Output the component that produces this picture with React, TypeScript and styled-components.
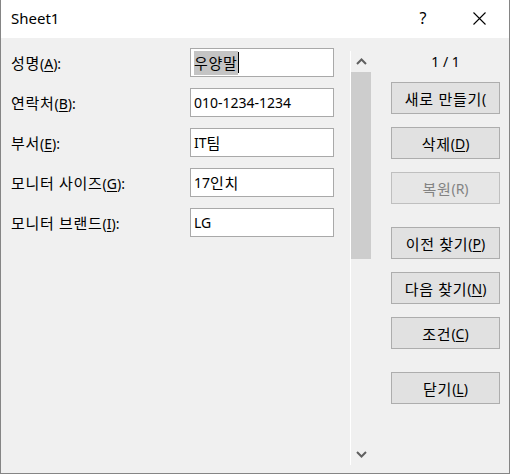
import React from "react";
import styled, { createGlobalStyle } from "styled-components";

const GlobalStyle = createGlobalStyle`
  html, body {
    margin: 0;
    padding: 0;
    background: #ffffff;
  }
  body {
    font-family: "Segoe UI", "Noto Sans", "Noto Sans CJK KR", sans-serif;
    color: #000000;
  }
`;

// Hangul runs are drawn a bit larger and looser, as the Windows dialog font does
const Ko = styled.span`
  font-size: 15px;
  letter-spacing: 0.7px;
`;

const ko = (text: string) =>
  text
    .split(/([가-힣]+(?:\s+[가-힣]+)*)/)
    .filter(Boolean)
    .map((part, i) => (/[가-힣]/.test(part) ? <Ko key={i}>{part}</Ko> : <React.Fragment key={i}>{part}</React.Fragment>));

const fields = [
  { label: "성명", key: "A", value: "우양말", selected: true },
  { label: "연락처", key: "B", value: "010-1234-1234" },
  { label: "부서", key: "E", value: "IT팀" },
  { label: "모니터 사이즈", key: "G", value: "17인치" },
  { label: "모니터 브랜드", key: "I", value: "LG" },
];

const App = () => {
  return (
    <>
      <GlobalStyle />
      <Dialog>
        <TitleBar>
          <Title>Sheet1</Title>
          <HelpButton>?</HelpButton>
          <CloseButton>
            <svg width="13" height="13" viewBox="0 0 13 13">
              <path d="M0.5 0.5 L12.5 12.5 M12.5 0.5 L0.5 12.5" stroke="#000" strokeWidth="1.1" fill="none" />
            </svg>
          </CloseButton>
        </TitleBar>
        <Body>
          <Fields>
            {fields.map((f) => (
              <FieldRow key={f.key}>
                <Label>
                  {ko(f.label)}(<u>{f.key}</u>):
                </Label>
                <Input>
                  {f.selected ? (
                    <>
                      <Selected>{ko(f.value)}</Selected>
                      <Caret />
                    </>
                  ) : (
                    ko(f.value)
                  )}
                </Input>
              </FieldRow>
            ))}
          </Fields>
          <ScrollBar>
            <ArrowBox>
              <svg width="11" height="7" viewBox="0 0 11 7">
                <polyline points="1,6 5.5,1.5 10,6" stroke="#606060" strokeWidth="2" fill="none" />
              </svg>
            </ArrowBox>
            <Track>
              <Thumb />
            </Track>
            <ArrowBox>
              <svg width="11" height="7" viewBox="0 0 11 7">
                <polyline points="1,1 5.5,5.5 10,1" stroke="#606060" strokeWidth="2" fill="none" />
              </svg>
            </ArrowBox>
          </ScrollBar>
          <Buttons>
            <Counter>1 / 1</Counter>
            <Button>{ko("새로 만들기")}(</Button>
            <Button>
              {ko("삭제")}(<u>D</u>)
            </Button>
            <Button disabled>{ko("복원")}(R)</Button>
            <Button $gapBefore>
              {ko("이전 찾기")}(<u>P</u>)
            </Button>
            <Button>
              {ko("다음 찾기")}(<u>N</u>)
            </Button>
            <Button>
              {ko("조건")}(<u>C</u>)
            </Button>
            <Button $gapBefore>
              {ko("닫기")}(<u>L</u>)
            </Button>
          </Buttons>
        </Body>
      </Dialog>
    </>
  );
};

export default App;

const Dialog = styled.div`
  width: 510px;
  height: 474px;
  box-sizing: border-box;
  border: 1px solid #858585;
  border-top: none;
  display: flex;
  flex-direction: column;
  background: #f0f0f0;
`;

const TitleBar = styled.div`
  height: 38px;
  flex: none;
  background: #ffffff;
  display: flex;
  align-items: center;
  padding-left: 10px;
`;

const Title = styled.div`
  flex: 1;
  font-size: 15px;
  padding-bottom: 2px;
`;

const HelpButton = styled.div`
  width: 22px;
  text-align: center;
  font-size: 16px;
  margin-right: 39px;
  padding-bottom: 2px;
`;

const CloseButton = styled.div`
  width: 13px;
  height: 13px;
  margin-right: 23px;
  display: flex;
  margin-bottom: 1px;
`;

const Body = styled.div`
  flex: 1;
  display: flex;
  flex-direction: row;
`;

const Fields = styled.div`
  width: 339px;
  padding: 10px 0 0 10px;
  display: flex;
  flex-direction: column;
  gap: 11px;
`;

const FieldRow = styled.div`
  display: flex;
  align-items: center;
  height: 29px;
`;

const Label = styled.div`
  width: 179px;
  font-size: 14px;
  u {
    text-underline-offset: 2px;
  }
`;

const Input = styled.div`
  width: 144px;
  height: 29px;
  box-sizing: border-box;
  border: 1px solid #a9a9a9;
  background: #ffffff;
  font-size: 14px;
  padding-left: 3px;
  display: flex;
  align-items: center;
`;

const Selected = styled.span`
  background: #c4c4c4;
  padding: 1px 0 2px;
`;

const Caret = styled.span`
  display: inline-block;
  width: 1px;
  height: 21px;
  background: #000000;
`;

const ScrollBar = styled.div`
  margin-top: 13px;
  height: 414px;
  width: 21px;
  box-sizing: border-box;
  border-left: 1px solid #ffffff;
  display: flex;
  flex-direction: column;
`;

const ArrowBox = styled.div`
  height: 21px;
  display: flex;
  align-items: center;
  justify-content: center;
`;

const Track = styled.div`
  flex: 1;
`;

const Thumb = styled.div`
  height: 187px;
  background: #cdcdcd;
`;

const Buttons = styled.div`
  width: 109px;
  margin-left: 20px;
  padding-top: 14px;
  display: flex;
  flex-direction: column;
  gap: 13px;
`;

const Counter = styled.div`
  height: 20px;
  line-height: 20px;
  text-align: center;
  font-size: 14px;
  margin-bottom: -3px;
`;

const Button = styled.div<{ disabled?: boolean; $gapBefore?: boolean }>`
  height: 32px;
  box-sizing: border-box;
  border: 1px solid ${(p) => (p.disabled ? "#bfbfbf" : "#adadad")};
  background: ${(p) => (p.disabled ? "#e6e6e6" : "#e1e1e1")};
  color: ${(p) => (p.disabled ? "#838383" : "#000000")};
  font-size: 14px;
  display: flex;
  align-items: center;
  justify-content: center;
  white-space: nowrap;
  overflow: hidden;
  margin-top: ${(p) => (p.$gapBefore ? "10px" : "0")};
  u {
    text-underline-offset: 2px;
  }
`;
